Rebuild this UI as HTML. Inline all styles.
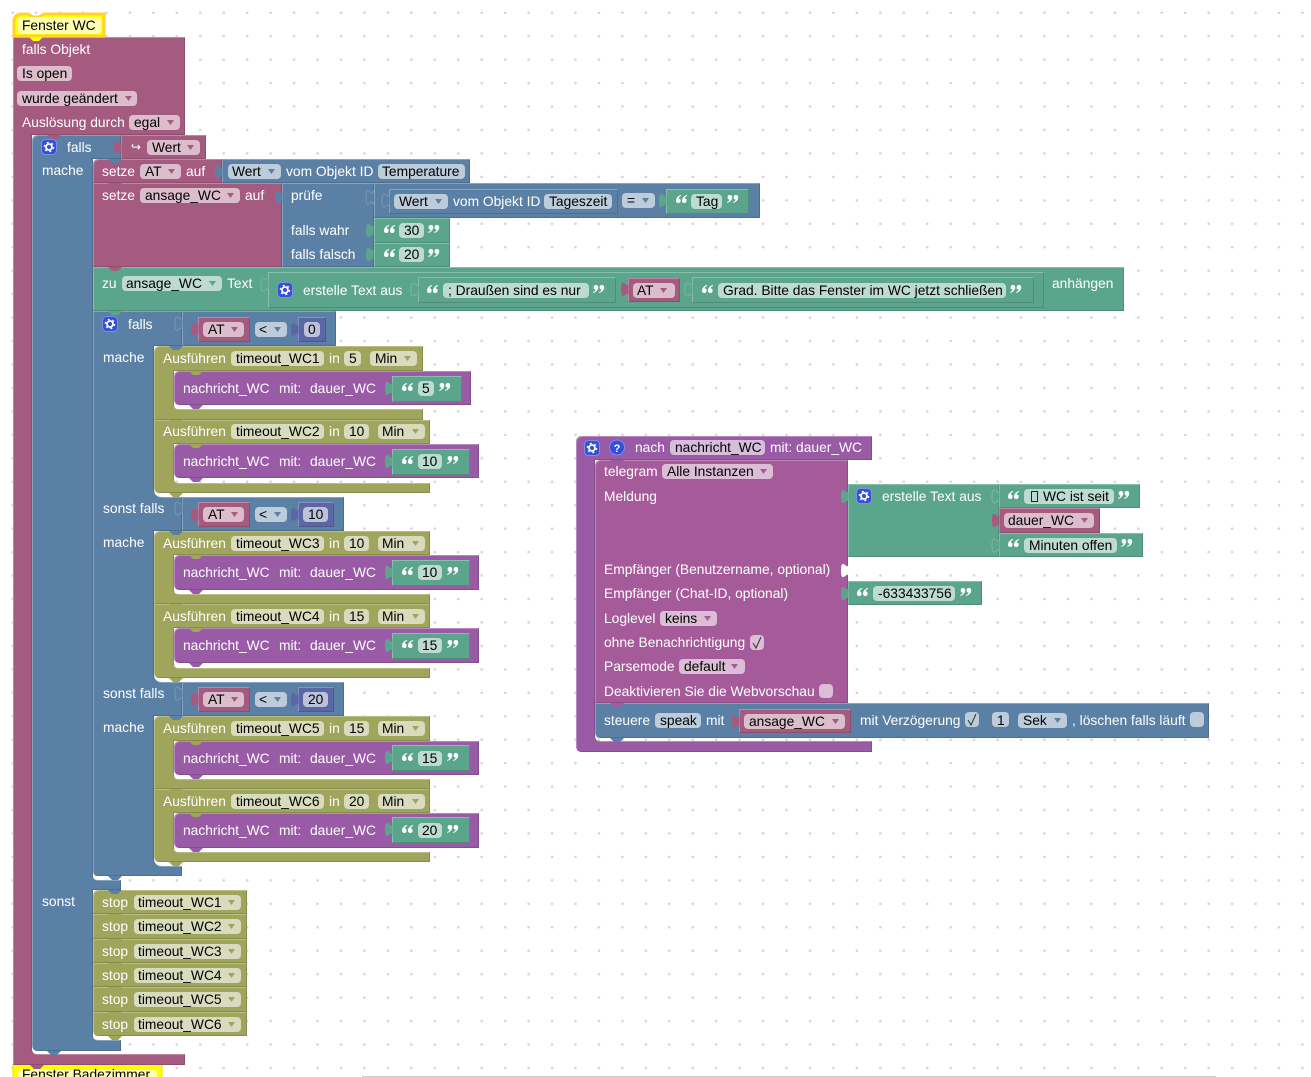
<!DOCTYPE html>
<html><head><meta charset="utf-8"><style>
html,body{margin:0;padding:0;background:#fff;width:1311px;height:1077px;overflow:hidden}
svg{display:block}
text{font:13.8px "Liberation Sans",Arial,sans-serif;fill:#000;white-space:pre}
.w{fill:#fff}
.k{filter:url(#b)}
.M{fill:#a55b80}.B{fill:#5b80a5}.G{fill:#5ba58c}.O{fill:#9fa55b}.P{fill:#995ba5}.T{fill:#a55b99}.N{fill:#5b67a5}
.fm{fill:#dbbdcc}.fb{fill:#bdccdb}.fg{fill:#bddbd1}.fo{fill:#d8dbbd}.fp{fill:#d6bddb}.ft{fill:#dbbdd6}.fn{fill:#bdc2db}
.s{stroke-opacity:.75;stroke-width:1}
</style></head><body>
<svg width="1311" height="1077" viewBox="0 0 1311 1077" xmlns="http://www.w3.org/2000/svg">
<defs>
<pattern id="d" patternUnits="userSpaceOnUse" x="0.97" y="0.97" width="23.45" height="23.45"><circle cx="11.725" cy="11.725" r="1.3" fill="#d4d4d4"/></pattern>
<filter id="b" filterUnits="userSpaceOnUse" x="0" y="0" width="1311" height="1077" color-interpolation-filters="sRGB">
<feOffset in="SourceAlpha" dx="1" dy="1" result="o1"/>
<feComposite in="SourceAlpha" in2="o1" operator="out" result="hl"/>
<feFlood flood-color="#fff" flood-opacity=".28"/>
<feComposite in2="hl" operator="in" result="h"/>
<feOffset in="SourceAlpha" dx="-1" dy="-1" result="o2"/>
<feComposite in="SourceAlpha" in2="o2" operator="out" result="sl"/>
<feFlood flood-color="#000" flood-opacity=".14"/>
<feComposite in2="sl" operator="in" result="s"/>
<feMerge><feMergeNode in="SourceGraphic"/><feMergeNode in="h"/><feMergeNode in="s"/></feMerge>
</filter>
<path id="n" d="M0 0l4 4h6l4-4z"/>
<path id="tab" d="M7.500 0c0 10-7.500-8-7.500 7.500s7.500-2.500 7.500 7.500"/>
<path id="dd" d="M0 0h7l-3.500 5z"/>
<g id="q1" fill="#fff"><path id="q0" d="M4.800 0C2 1 0 3 0 5.700a2.300 2.300 0 1 0 2.600-2.300C2.700 2.300 3.700 1.300 5.200 1z"/><use href="#q0" x="6"/></g>
<g id="q2" fill="#fff" transform="rotate(180 5.600 4)"><path id="q3" d="M4.800 0C2 1 0 3 0 5.700a2.300 2.300 0 1 0 2.600-2.300C2.700 2.300 3.700 1.300 5.200 1z"/><use href="#q3" x="6"/></g>
<g id="gear"><rect x=".5" y=".5" width="15" height="15" rx="4" fill="#3350d8" stroke="#7f8fe8"/><circle cx="8" cy="8" r="3" fill="none" stroke="#fff" stroke-width="1.800"/><circle cx="8" cy="8" r="4.600" fill="none" stroke="#fff" stroke-width="1.400" stroke-dasharray="2 2.820"/></g>
<g id="ck" fill="none" stroke="#333" stroke-width="1"><path d="M3 8l3 5 5-11"/></g>
</defs>
<rect width="1311" height="1077" fill="url(#d)"/>
<rect x="362" y="1076" width="854" height="1" fill="#ccc"/>

<!-- BLOCK LAYER -->
<path d="M13 1064H162V1090H13z" fill="#ffff00" stroke="#f0e000"/>
<path class="k M" d="M13 37H185V135H32V1049q0 5 5 5H185V1065H13z"/>
<path d="M14 36V22q0-8 8-8H28l5 3h6l5-3H104V36z" fill="#ffff00" stroke="#ffd42a" stroke-width="3"/>
<path class="k B" d="M32 141q0-6 6-6H121V159H93V876q0 4 5 4H121V890H93V1036q0 4 5 4H121V1051H38q-6 0-6-6z"/>
<rect class="k M" x="121" y="135" width="85" height="24"/>
<path class="k M" d="M93 165q0-6 6-6H222V183H93z"/>
<rect class="k B" x="222" y="159" width="248" height="24"/>
<rect class="k M" x="93" y="183" width="189" height="84"/>
<rect class="k B" x="282" y="183" width="92" height="84"/>
<rect class="k B" x="374" y="183" width="386" height="35"/>
<rect class="k B" x="389" y="189" width="229" height="25"/>
<rect class="k G" x="666" y="189" width="83" height="25"/>
<rect class="k G" x="374" y="218" width="76" height="25"/>
<rect class="k G" x="374" y="243" width="76" height="24"/>
<rect class="k G" x="93" y="267" width="1031" height="44"/>
<rect class="k G" x="268" y="272" width="776" height="36"/>
<rect class="k G" x="418" y="277" width="198" height="26"/>
<rect class="k M" x="628" y="278" width="52" height="24"/>
<rect class="k G" x="692" y="277" width="342" height="26"/>

<path class="k B" d="M93 311H182V346H154V489q0 8 8 8H182V531H154V674q0 8 8 8H182V716H154V858q0 8 8 8H182V876H98q-5 0-5-5z"/>
<rect class="k B" x="182" y="311" width="154" height="35"/>
<rect class="k M" x="198" y="317" width="52" height="25"/>
<rect class="k N" x="298" y="317" width="28" height="25"/>
<rect class="k B" x="182" y="497" width="162" height="34"/>
<rect class="k M" x="198" y="502" width="52" height="25"/>
<rect class="k N" x="298" y="502" width="36" height="25"/>
<rect class="k B" x="182" y="682" width="162" height="34"/>
<rect class="k M" x="198" y="687" width="52" height="25"/>
<rect class="k N" x="298" y="687" width="36" height="25"/>

<path class="k O" d="M154 352q0-6 6-6H423V371H174V405q0 4 4 4H423V420H154z"/>
<path class="k O" d="M154 420H430V444H174V479q0 4 4 4H430V493H160q-6 0-6-6z"/>
<path class="k O" d="M154 537q0-6 6-6H430V555H174V590q0 4 4 4H430V604H154z"/>
<path class="k O" d="M154 604H430V628H174V664q0 4 4 4H430V678H160q-6 0-6-6z"/>
<path class="k O" d="M154 722q0-6 6-6H430V741H174V775q0 4 4 4H430V789H154z"/>
<path class="k O" d="M154 789H430V813H174V848q0 4 4 4H430V862H160q-6 0-6-6z"/>

<path class="k P" d="M174 377q0-6 6-6H471V405H180q-6 0-6-6z"/>
<rect class="k G" x="392" y="376" width="70" height="26"/>
<path class="k P" d="M174 450q0-6 6-6H479V478H180q-6 0-6-6z"/>
<rect class="k G" x="392" y="449" width="78" height="26"/>
<path class="k P" d="M174 561q0-6 6-6H479V590H180q-6 0-6-6z"/>
<rect class="k G" x="392" y="560" width="78" height="26"/>
<path class="k P" d="M174 634q0-6 6-6H479V663H180q-6 0-6-6z"/>
<rect class="k G" x="392" y="633" width="78" height="26"/>
<path class="k P" d="M174 747q0-6 6-6H479V775H180q-6 0-6-6z"/>
<rect class="k G" x="392" y="745" width="78" height="26"/>
<path class="k P" d="M174 819q0-6 6-6H479V848H180q-6 0-6-6z"/>
<rect class="k G" x="392" y="817" width="78" height="26"/>

<path class="k O" d="M93 896q0-6 6-6H247V914H93z"/>
<rect class="k O" x="93" y="914" width="154" height="25"/>
<rect class="k O" x="93" y="939" width="154" height="24"/>
<rect class="k O" x="93" y="963" width="154" height="24"/>
<rect class="k O" x="93" y="987" width="154" height="25"/>
<path class="k O" d="M93 1012H247V1036H99q-6 0-6-6z"/>

<!-- right stack -->
<path class="k P" d="M576 442q0-6 6-6H872V460H595V736q0 5 5 5H872V752H582q-6 0-6-6z"/>
<path class="k T" d="M595 466q0-6 6-6H848V703H595z"/>
<path class="k B" d="M595 703H1209V738H601q-6 0-6-6z"/>
<rect class="k M" x="739" y="709" width="112" height="24"/>
<rect class="k G" x="848" y="484" width="151" height="73"/>
<rect class="k G" x="999" y="484" width="141" height="24"/>
<rect class="k M" x="999" y="508" width="101" height="25"/>
<rect class="k G" x="999" y="533" width="144" height="24"/>
<rect class="k G" x="848" y="581" width="134" height="24"/>

<!-- tabs -->
<use href="#tab" x="114" y="140" class="M"/>
<use href="#tab" x="215" y="164" class="B"/>
<use href="#tab" x="275" y="190" class="B"/>
<use href="#tab" x="366" y="190" class="B s" stroke="#86a0ba"/>
<use href="#tab" x="382" y="193" class="B s" stroke="#86a0ba"/>
<use href="#tab" x="659" y="193" class="G"/>
<use href="#tab" x="366" y="223" class="G"/>
<use href="#tab" x="366" y="247" class="G"/>
<use href="#tab" x="261" y="277" class="G s" stroke="#85bda9"/>
<use href="#tab" x="411" y="282" class="G s" stroke="#85bda9"/>
<use href="#tab" x="621" y="282" class="M"/>
<use href="#tab" x="685" y="282" class="G s" stroke="#85bda9"/>
<use href="#tab" x="175" y="316" class="B s" stroke="#86a0ba"/>
<use href="#tab" x="191" y="322" class="M"/>
<use href="#tab" x="291" y="322" class="N"/>
<use href="#tab" x="175" y="501" class="B s" stroke="#86a0ba"/>
<use href="#tab" x="191" y="507" class="M"/>
<use href="#tab" x="291" y="507" class="N"/>
<use href="#tab" x="175" y="686" class="B s" stroke="#86a0ba"/>
<use href="#tab" x="191" y="692" class="M"/>
<use href="#tab" x="291" y="692" class="N"/>
<use href="#tab" x="385" y="381" class="G"/>
<use href="#tab" x="385" y="454" class="G"/>
<use href="#tab" x="385" y="565" class="G"/>
<use href="#tab" x="385" y="638" class="G"/>
<use href="#tab" x="385" y="750" class="G"/>
<use href="#tab" x="385" y="822" class="G"/>
<use href="#tab" x="841" y="489" class="G"/>
<use href="#tab" x="841" y="563" fill="#fff"/>
<use href="#tab" x="841" y="586" class="G"/>
<use href="#tab" x="992" y="489" class="G s" stroke="#85bda9"/>
<use href="#tab" x="992" y="513" class="M"/>
<use href="#tab" x="992" y="538" class="G s" stroke="#85bda9"/>
<use href="#tab" x="732" y="714" class="M"/>

<!-- notches -->
<use href="#n" x="29" y="37" fill="#ffff00"/>
<use href="#n" x="30" y="1065" class="M"/>
<use href="#n" x="47" y="135" class="M"/>
<use href="#n" x="47" y="1051" class="B"/>
<use href="#n" x="108" y="159" class="B"/>
<use href="#n" x="108" y="183" class="M"/>
<use href="#n" x="108" y="267" class="M"/>
<use href="#n" x="108" y="311" class="G"/>
<use href="#n" x="108" y="876" class="B"/>
<use href="#n" x="108" y="890" class="B"/>
<use href="#n" x="108" y="914" class="O"/>
<use href="#n" x="108" y="939" class="O"/>
<use href="#n" x="108" y="963" class="O"/>
<use href="#n" x="108" y="987" class="O"/>
<use href="#n" x="108" y="1012" class="O"/>
<use href="#n" x="108" y="1036" class="O"/>
<use href="#n" x="169" y="346" class="B"/>
<use href="#n" x="169" y="420" class="O"/>
<use href="#n" x="169" y="493" class="O"/>
<use href="#n" x="169" y="531" class="B"/>
<use href="#n" x="169" y="604" class="O"/>
<use href="#n" x="169" y="678" class="O"/>
<use href="#n" x="169" y="716" class="B"/>
<use href="#n" x="169" y="789" class="O"/>
<use href="#n" x="169" y="862" class="O"/>
<use href="#n" x="189" y="371" class="O"/>
<use href="#n" x="189" y="444" class="O"/>
<use href="#n" x="189" y="555" class="O"/>
<use href="#n" x="189" y="628" class="O"/>
<use href="#n" x="189" y="741" class="O"/>
<use href="#n" x="189" y="813" class="O"/>
<use href="#n" x="189" y="405" class="P"/>
<use href="#n" x="189" y="478" class="P"/>
<use href="#n" x="189" y="590" class="P"/>
<use href="#n" x="189" y="663" class="P"/>
<use href="#n" x="189" y="775" class="P"/>
<use href="#n" x="189" y="848" class="P"/>
<use href="#n" x="610" y="460" class="P"/>
<use href="#n" x="610" y="703" class="T"/>
<use href="#n" x="610" y="738" class="B"/>

<!-- hat + main -->
<rect x="18" y="17" width="83" height="17" rx="4" fill="#ffffb0"/>
<text x="22" y="30">Fenster WC</text>
<rect x="18" y="1070" width="139" height="17" rx="4" fill="#ffffb0"/>
<text x="22" y="1079">Fenster Badezimmer</text>
<text class="w" x="22" y="54">falls Objekt</text>
<rect class="fm" x="17" y="66" width="55" height="15" rx="4"/><text x="22" y="78">Is open</text>
<rect class="fm" x="17" y="91" width="120" height="15" rx="4"/><text x="22" y="103">wurde geändert</text><use href="#dd" x="125" y="96" class="M"/>
<text class="w" x="22" y="127">Auslösung durch</text>
<rect class="fm" x="129" y="115" width="51" height="15" rx="4"/><text x="134" y="127">egal</text><use href="#dd" x="167" y="120" class="M"/>

<!-- falls -->
<use href="#gear" x="41" y="139"/>
<text class="w" x="67" y="152">falls</text>
<text x="131" y="151" style="font:12px 'DejaVu Sans',sans-serif;fill:#fff">↪</text>
<rect class="fm" x="147" y="140" width="53" height="15" rx="4"/><text x="152" y="152">Wert</text><use href="#dd" x="187" y="145" class="M"/>
<text class="w" x="42" y="175">mache</text>
<text class="w" x="42" y="906">sonst</text>

<!-- setze AT -->
<text class="w" x="102" y="176">setze</text>
<rect class="fm" x="140" y="164" width="41" height="15" rx="4"/><text x="145" y="176">AT</text><use href="#dd" x="168" y="169" class="M"/>
<text class="w" x="186" y="176">auf</text>
<rect class="fb" x="228" y="164" width="53" height="15" rx="4"/><text x="232" y="176">Wert</text><use href="#dd" x="268" y="169" class="B"/>
<text class="w" x="286" y="176">vom Objekt ID</text>
<rect class="fb" x="378" y="164" width="87" height="15" rx="4"/><text x="382" y="176">Temperature</text>

<!-- setze ansage -->
<text class="w" x="102" y="200">setze</text>
<rect class="fm" x="140" y="188" width="100" height="15" rx="4"/><text x="145" y="200">ansage_WC</text><use href="#dd" x="227" y="193" class="M"/>
<text class="w" x="245" y="200">auf</text>
<text class="w" x="291" y="200">prüfe</text>
<rect class="fb" x="394" y="194" width="54" height="15" rx="4"/><text x="399" y="206">Wert</text><use href="#dd" x="435" y="199" class="B"/>
<text class="w" x="453" y="206">vom Objekt ID</text>
<rect class="fb" x="544" y="194" width="68" height="15" rx="4"/><text x="549" y="206">Tageszeit</text>
<rect class="fb" x="622" y="193" width="33" height="15" rx="4"/><text x="627" y="205">=</text><use href="#dd" x="642" y="198" class="B"/>
<use href="#q1" x="676" y="195"/><rect class="fg" x="691" y="194" width="31" height="15" rx="4"/><text x="696" y="206">Tag</text><use href="#q2" x="727" y="195"/>
<text class="w" x="291" y="235">falls wahr</text>
<use href="#q1" x="384" y="225"/><rect class="fg" x="399" y="223" width="25" height="15" rx="4"/><text x="404" y="235">30</text><use href="#q2" x="428" y="225"/>
<text class="w" x="291" y="259">falls falsch</text>
<use href="#q1" x="384" y="249"/><rect class="fg" x="399" y="247" width="25" height="15" rx="4"/><text x="404" y="259">20</text><use href="#q2" x="428" y="249"/>

<!-- zu -->
<text class="w" x="102" y="288">zu</text>
<rect class="fg" x="122" y="276" width="100" height="15" rx="4"/><text x="126" y="288">ansage_WC</text><use href="#dd" x="209" y="281" class="G"/>
<text class="w" x="227" y="288">Text</text>
<use href="#gear" x="277" y="282"/>
<text class="w" x="303" y="295">erstelle Text aus</text>
<use href="#q1" x="427" y="285"/><rect class="fg" x="443" y="283" width="146" height="15" rx="4"/><text x="448" y="295">; Draußen sind es nur</text><use href="#q2" x="593" y="285"/>
<rect class="fm" x="633" y="283" width="42" height="15" rx="4"/><text x="637" y="295">AT</text><use href="#dd" x="660" y="288" class="M"/>
<use href="#q1" x="702" y="285"/><rect class="fg" x="718" y="283" width="288" height="15" rx="4"/><text x="723" y="295">Grad. Bitte das Fenster im WC jetzt schließen</text><use href="#q2" x="1010" y="285"/>
<text class="w" x="1052" y="288">anhängen</text>

<!-- nested falls rows -->
<use href="#gear" x="102" y="316"/>
<text class="w" x="128" y="329">falls</text>
<rect class="fm" x="203" y="322" width="41" height="15" rx="4"/><text x="208" y="334">AT</text><use href="#dd" x="231" y="327" class="M"/>
<rect class="fb" x="255" y="322" width="32" height="15" rx="4"/><text x="259" y="334">&lt;</text><use href="#dd" x="274" y="327" class="B"/>
<rect class="fn" x="304" y="322" width="16" height="15" rx="4"/><text x="308" y="334">0</text>
<text class="w" x="103" y="362">mache</text>

<text class="w" x="103" y="513">sonst falls</text>
<rect class="fm" x="203" y="507" width="41" height="15" rx="4"/><text x="208" y="519">AT</text><use href="#dd" x="231" y="512" class="M"/>
<rect class="fb" x="255" y="507" width="32" height="15" rx="4"/><text x="259" y="519">&lt;</text><use href="#dd" x="274" y="512" class="B"/>
<rect class="fn" x="303" y="507" width="25" height="15" rx="4"/><text x="308" y="519">10</text>
<text class="w" x="103" y="547">mache</text>

<text class="w" x="103" y="698">sonst falls</text>
<rect class="fm" x="203" y="692" width="41" height="15" rx="4"/><text x="208" y="704">AT</text><use href="#dd" x="231" y="697" class="M"/>
<rect class="fb" x="255" y="692" width="32" height="15" rx="4"/><text x="259" y="704">&lt;</text><use href="#dd" x="274" y="697" class="B"/>
<rect class="fn" x="303" y="692" width="25" height="15" rx="4"/><text x="308" y="704">20</text>
<text class="w" x="103" y="732">mache</text>

<!-- Ausfuehren rows -->
<text class="w" x="163" y="363">Ausführen</text><rect class="fo" x="231" y="351" width="93" height="15" rx="4"/><text x="236" y="363">timeout_WC1</text><text class="w" x="329" y="363">in</text><rect class="fo" x="344" y="351" width="17" height="15" rx="4"/><text x="349" y="363">5</text><rect class="fo" x="370" y="351" width="47" height="15" rx="4"/><text x="375" y="363">Min</text><use href="#dd" x="404" y="356" class="O"/>
<text class="w" x="183" y="393">nachricht_WC</text><text class="w" x="279" y="393">mit:</text><text class="w" x="310" y="393">dauer_WC</text>
<use href="#q1" x="402" y="383"/><rect class="fg" x="418" y="381" width="16" height="15" rx="4"/><text x="422" y="393">5</text><use href="#q2" x="439" y="383"/>

<text class="w" x="163" y="436">Ausführen</text><rect class="fo" x="231" y="424" width="93" height="15" rx="4"/><text x="236" y="436">timeout_WC2</text><text class="w" x="329" y="436">in</text><rect class="fo" x="344" y="424" width="25" height="15" rx="4"/><text x="349" y="436">10</text><rect class="fo" x="378" y="424" width="47" height="15" rx="4"/><text x="382" y="436">Min</text><use href="#dd" x="412" y="429" class="O"/>
<text class="w" x="183" y="466">nachricht_WC</text><text class="w" x="279" y="466">mit:</text><text class="w" x="310" y="466">dauer_WC</text>
<use href="#q1" x="402" y="456"/><rect class="fg" x="418" y="454" width="24" height="15" rx="4"/><text x="422" y="466">10</text><use href="#q2" x="447" y="456"/>

<text class="w" x="163" y="548">Ausführen</text><rect class="fo" x="231" y="536" width="93" height="15" rx="4"/><text x="236" y="548">timeout_WC3</text><text class="w" x="329" y="548">in</text><rect class="fo" x="344" y="536" width="25" height="15" rx="4"/><text x="349" y="548">10</text><rect class="fo" x="378" y="536" width="47" height="15" rx="4"/><text x="382" y="548">Min</text><use href="#dd" x="412" y="541" class="O"/>
<text class="w" x="183" y="577">nachricht_WC</text><text class="w" x="279" y="577">mit:</text><text class="w" x="310" y="577">dauer_WC</text>
<use href="#q1" x="402" y="567"/><rect class="fg" x="418" y="565" width="24" height="15" rx="4"/><text x="422" y="577">10</text><use href="#q2" x="447" y="567"/>

<text class="w" x="163" y="621">Ausführen</text><rect class="fo" x="231" y="609" width="93" height="15" rx="4"/><text x="236" y="621">timeout_WC4</text><text class="w" x="329" y="621">in</text><rect class="fo" x="344" y="609" width="25" height="15" rx="4"/><text x="349" y="621">15</text><rect class="fo" x="378" y="609" width="47" height="15" rx="4"/><text x="382" y="621">Min</text><use href="#dd" x="412" y="614" class="O"/>
<text class="w" x="183" y="650">nachricht_WC</text><text class="w" x="279" y="650">mit:</text><text class="w" x="310" y="650">dauer_WC</text>
<use href="#q1" x="402" y="640"/><rect class="fg" x="418" y="638" width="24" height="15" rx="4"/><text x="422" y="650">15</text><use href="#q2" x="447" y="640"/>

<text class="w" x="163" y="733">Ausführen</text><rect class="fo" x="231" y="721" width="93" height="15" rx="4"/><text x="236" y="733">timeout_WC5</text><text class="w" x="329" y="733">in</text><rect class="fo" x="344" y="721" width="25" height="15" rx="4"/><text x="349" y="733">15</text><rect class="fo" x="378" y="721" width="47" height="15" rx="4"/><text x="382" y="733">Min</text><use href="#dd" x="412" y="726" class="O"/>
<text class="w" x="183" y="763">nachricht_WC</text><text class="w" x="279" y="763">mit:</text><text class="w" x="310" y="763">dauer_WC</text>
<use href="#q1" x="402" y="753"/><rect class="fg" x="418" y="751" width="24" height="15" rx="4"/><text x="422" y="763">15</text><use href="#q2" x="447" y="753"/>

<text class="w" x="163" y="806">Ausführen</text><rect class="fo" x="231" y="794" width="93" height="15" rx="4"/><text x="236" y="806">timeout_WC6</text><text class="w" x="329" y="806">in</text><rect class="fo" x="344" y="794" width="25" height="15" rx="4"/><text x="349" y="806">20</text><rect class="fo" x="378" y="794" width="47" height="15" rx="4"/><text x="382" y="806">Min</text><use href="#dd" x="412" y="799" class="O"/>
<text class="w" x="183" y="835">nachricht_WC</text><text class="w" x="279" y="835">mit:</text><text class="w" x="310" y="835">dauer_WC</text>
<use href="#q1" x="402" y="825"/><rect class="fg" x="418" y="823" width="24" height="15" rx="4"/><text x="422" y="835">20</text><use href="#q2" x="447" y="825"/>

<!-- stop rows -->
<text class="w" x="102" y="907">stop</text><rect class="fo" x="134" y="895" width="107" height="15" rx="4"/><text x="138" y="907">timeout_WC1</text><use href="#dd" x="228" y="900" class="O"/>
<text class="w" x="102" y="931">stop</text><rect class="fo" x="134" y="919" width="107" height="15" rx="4"/><text x="138" y="931">timeout_WC2</text><use href="#dd" x="228" y="924" class="O"/>
<text class="w" x="102" y="956">stop</text><rect class="fo" x="134" y="944" width="107" height="15" rx="4"/><text x="138" y="956">timeout_WC3</text><use href="#dd" x="228" y="949" class="O"/>
<text class="w" x="102" y="980">stop</text><rect class="fo" x="134" y="968" width="107" height="15" rx="4"/><text x="138" y="980">timeout_WC4</text><use href="#dd" x="228" y="973" class="O"/>
<text class="w" x="102" y="1004">stop</text><rect class="fo" x="134" y="992" width="107" height="15" rx="4"/><text x="138" y="1004">timeout_WC5</text><use href="#dd" x="228" y="997" class="O"/>
<text class="w" x="102" y="1029">stop</text><rect class="fo" x="134" y="1017" width="107" height="15" rx="4"/><text x="138" y="1029">timeout_WC6</text><use href="#dd" x="228" y="1022" class="O"/>

<!-- right group -->
<use href="#gear" x="584" y="440"/>
<circle cx="617" cy="447.500" r="7.500" fill="#3350d8" stroke="#7f8fe8"/>
<text x="617" y="452" text-anchor="middle" style="font:bold 11px 'Liberation Sans',sans-serif;fill:#fff">?</text>
<text class="w" x="635" y="452">nach</text>
<rect class="fp" x="670" y="440" width="95" height="15" rx="4"/><text x="675" y="452">nachricht_WC</text>
<text class="w" x="770" y="452">mit: dauer_WC</text>
<text class="w" x="604" y="476">telegram</text>
<rect class="ft" x="662" y="464" width="111" height="15" rx="4"/><text x="667" y="476">Alle Instanzen</text><use href="#dd" x="760" y="469" class="T"/>
<text class="w" x="604" y="501">Meldung</text>
<text class="w" x="604" y="574">Empfänger (Benutzername, optional)</text>
<text class="w" x="604" y="598">Empfänger (Chat-ID, optional)</text>
<text class="w" x="604" y="623">Loglevel</text>
<rect class="ft" x="660" y="611" width="57" height="15" rx="4"/><text x="665" y="623">keins</text><use href="#dd" x="704" y="616" class="T"/>
<text class="w" x="604" y="647">ohne Benachrichtigung</text>
<rect class="ft" x="750" y="635" width="14" height="15" rx="4"/><use href="#ck" x="750" y="635"/>
<text class="w" x="604" y="671">Parsemode</text>
<rect class="ft" x="679" y="659" width="66" height="15" rx="4"/><text x="684" y="671">default</text><use href="#dd" x="731" y="664" class="T"/>
<text class="w" x="604" y="696">Deaktivieren Sie die Webvorschau</text>
<rect class="ft" x="819" y="684" width="14" height="14" rx="4"/>

<text class="w" x="604" y="725">steuere</text>
<rect class="fb" x="655" y="713" width="46" height="15" rx="4"/><text x="660" y="725">speak</text>
<text class="w" x="706" y="725">mit</text>
<rect class="fm" x="744" y="714" width="101" height="15" rx="4"/><text x="749" y="726">ansage_WC</text><use href="#dd" x="832" y="719" class="M"/>
<text class="w" x="860" y="725">mit Verzögerung</text>
<rect class="fb" x="965" y="712" width="14" height="15" rx="4"/><use href="#ck" x="965" y="712"/>
<rect class="fb" x="992" y="712" width="17" height="15" rx="4"/><text x="997" y="725">1</text>
<rect class="fb" x="1018" y="713" width="49" height="15" rx="4"/><text x="1023" y="725">Sek</text><use href="#dd" x="1054" y="718" class="B"/>
<text class="w" x="1072" y="725">, löschen falls läuft</text>
<rect class="fb" x="1190" y="712" width="14" height="15" rx="4"/>

<use href="#gear" x="856" y="488"/>
<text class="w" x="882" y="501">erstelle Text aus</text>
<use href="#q1" x="1008" y="491"/><rect class="fg" x="1024" y="489" width="90" height="15" rx="4"/><rect x="1031.500" y="491.500" width="6" height="10" fill="none" stroke="#222" stroke-width="1"/><text x="1043" y="501">WC ist seit</text><use href="#q2" x="1118" y="491"/>
<rect class="fm" x="1004" y="513" width="90" height="15" rx="4"/><text x="1008" y="525">dauer_WC</text><use href="#dd" x="1081" y="518" class="M"/>
<use href="#q1" x="1008" y="539"/><rect class="fg" x="1024" y="538" width="93" height="15" rx="4"/><text x="1029" y="550">Minuten offen</text><use href="#q2" x="1121" y="539"/>
<use href="#q1" x="857" y="588"/><rect class="fg" x="873" y="586" width="82" height="15" rx="4"/><text x="878" y="598">-633433756</text><use href="#q2" x="960" y="588"/>
</svg>
</body></html>
